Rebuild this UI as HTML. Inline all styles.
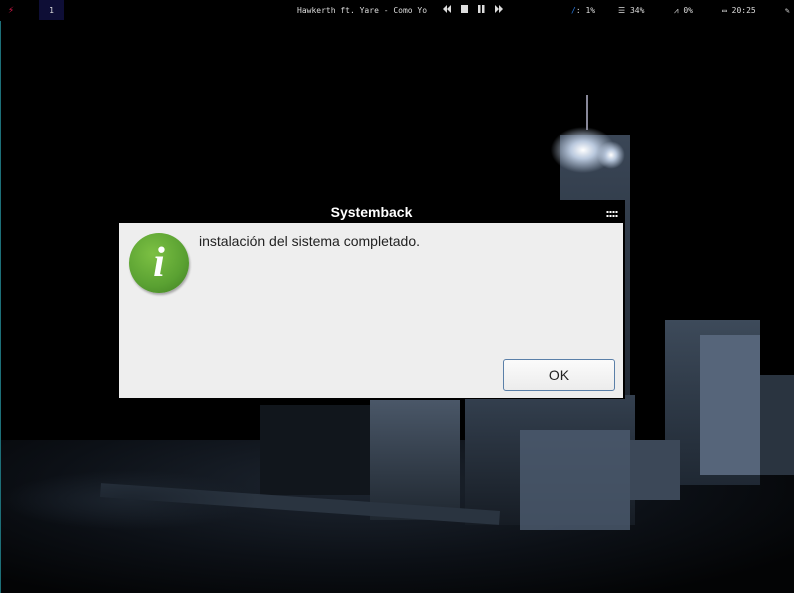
<!DOCTYPE html>
<html><head><meta charset="utf-8"><style>
*{margin:0;padding:0;box-sizing:border-box}
body{width:794px;height:593px;overflow:hidden;background:#000;position:relative;font-family:"Liberation Sans",sans-serif}
.bg{position:absolute;left:0;top:0;width:794px;height:593px;background:#000}
.bg div{position:absolute}
.bar{position:absolute;left:0;top:0;width:794px;height:21px;background:#000;font-family:"DejaVu Sans Mono","Liberation Mono",monospace;font-size:8px;color:#ddd;line-height:21px}
.bar span{position:absolute;top:0}
</style></head><body>
<div class="bg">
 <div style="left:0;top:440px;width:794px;height:153px;background:radial-gradient(ellipse at 45% 30%,#1d2530 0%,#0c1016 50%,#030405 85%)"></div>
 <div style="left:560px;top:135px;width:70px;height:300px;background:linear-gradient(#3a4656,#1e2630)"></div>
 <div style="left:548px;top:125px;width:70px;height:50px;border-radius:50%;background:radial-gradient(#fff 0%,#b9c8dd 25%,transparent 65%)"></div>
 <div style="left:596px;top:140px;width:30px;height:30px;border-radius:50%;background:radial-gradient(#fff 0%,#b9c8dd 25%,transparent 65%)"></div>
 <div style="left:586px;top:95px;width:2px;height:35px;background:#889"></div>
 <div style="left:665px;top:320px;width:95px;height:165px;background:linear-gradient(#3d4a5a,#1f2833)"></div>
 <div style="left:700px;top:335px;width:60px;height:140px;background:#56657a"></div>
 <div style="left:760px;top:375px;width:34px;height:100px;background:#2a3440"></div>
 <div style="left:370px;top:400px;width:90px;height:120px;background:linear-gradient(#4a5768,#1f2730)"></div>
 <div style="left:465px;top:395px;width:170px;height:130px;background:linear-gradient(#34404f,#161c24)"></div>
 <div style="left:520px;top:430px;width:110px;height:100px;background:#4e5d70;opacity:.8"></div>
 <div style="left:630px;top:440px;width:50px;height:60px;background:#3c4858"></div>
 <div style="left:260px;top:405px;width:110px;height:90px;background:#11161c"></div>
 <div style="left:100px;top:497px;width:400px;height:14px;background:#2a3440;transform:rotate(4deg)"></div>
 <div style="left:0;top:470px;width:260px;height:60px;background:radial-gradient(ellipse,#1c242e,transparent 70%)"></div>
</div>
<div style="position:absolute;left:0;top:0;width:1px;height:593px;background:#1d6f78"></div>
<div class="bar">
 <span style="left:8px;color:#e0194d;font-size:10px">⚡</span>
 <span style="left:39px;width:25px;height:20px;background:#0e0e36;text-align:center;color:#ddd">1</span>
 <span style="left:297px">Hawkerth ft. Yare - Como Yo</span>
 <svg style="position:absolute;left:443px;top:4px" width="60" height="12" viewBox="0 0 60 12" fill="#ddd">
  <path d="M0 5 L4 1 V9 Z M4 5 L8 1 V9 Z"/><rect x="18" y="1" width="7" height="8"/><rect x="35" y="1" width="2.5" height="8"/><rect x="39" y="1" width="2.5" height="8"/><path d="M52 1 L56 5 L52 9 Z M56 1 L60 5 L56 9 Z"/>
 </svg>
 <span style="left:571px"><b style="color:#2a7be0;font-weight:normal">/</b>: 1%</span>
 <span style="left:618px">☰ 34%</span>
 <span style="left:674px">⩘ 0%</span>
 <span style="left:722px">▭ 20:25</span>
 <span style="left:785px">✎</span>
</div>
<div style="position:absolute;left:118px;top:200px;width:507px;height:199px;background:#000"></div>
<div style="position:absolute;left:119px;top:201px;width:505px;height:22px;color:#fff;font-weight:bold;font-size:14px;text-align:center;line-height:22px">Systemback</div>
<div style="position:absolute;left:606px;top:210px;width:12px;height:8px;background:radial-gradient(circle,#fff 45%,transparent 50%) 0 0/3px 4px"></div>
<div style="position:absolute;left:119px;top:223px;width:504px;height:175px;background:#eeeeee"></div>
<div style="position:absolute;left:129px;top:233px;width:60px;height:60px;border-radius:50%;background:radial-gradient(circle at 40% 35%,#7cc043,#5aa132 60%,#3f7d22);box-shadow:1px 2px 2px rgba(0,0,0,.3)"></div>
<div style="position:absolute;left:129px;top:233px;width:60px;height:60px;text-align:center;font:italic bold 42px/60px 'Liberation Serif',serif;color:#fff">i</div>
<div style="position:absolute;left:199px;top:233px;font-size:14px;color:#222">instalación del sistema completado.</div>
<div style="position:absolute;left:503px;top:359px;width:112px;height:32px;border:1px solid #5a7fa8;border-radius:3px;background:linear-gradient(#fbfbfb,#ececec);text-align:center;line-height:30px;font-size:14px;color:#222">OK</div>
</body></html>
